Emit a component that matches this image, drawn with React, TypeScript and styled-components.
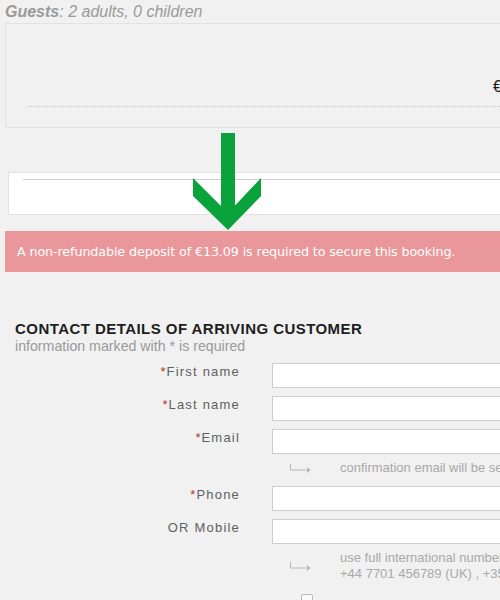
import styled, { createGlobalStyle } from 'styled-components';

const GlobalStyle = createGlobalStyle`
  html, body {
    margin: 0;
    padding: 0;
    background: #f1f1f1;
    overflow: hidden;
  }
  body {
    font-family: "Liberation Sans", Arial, sans-serif;
  }
`;

const Page = styled.div`
  position: relative;
  width: 500px;
  height: 600px;
  overflow: hidden;
`;

const Guests = styled.div`
  padding: 3px 0 0 5px;
  height: 20px;
  font-size: 16px;
  font-style: italic;
  color: #9a9a9a;
  b {
    font-weight: bold;
  }
`;

const SummaryBox = styled.div`
  margin-left: 5px;
  width: 520px;
  height: 105px;
  border: 1px solid #e2e2e2;
  display: flex;
  flex-direction: column;
  justify-content: flex-end;
  padding-bottom: 20px;
  box-sizing: border-box;
`;

const PriceRow = styled.div`
  padding-left: 487px;
  font-size: 16px;
  color: #1a1a1a;
  height: 18px;
  white-space: nowrap;
`;

const Dotted = styled.div`
  margin: 10px 0 0 22px;
  border-top: 1px dotted #c8c8c8;
`;

const WhiteBox = styled.div`
  margin: 44px 0 0 8px;
  width: 520px;
  height: 43px;
  background: #fff;
  border: 1px solid #e2e2e2;
  box-sizing: border-box;
  padding: 6px 0 0 14px;
`;

const InnerLine = styled.div`
  border-top: 1px solid #cfcfcf;
`;

const Banner = styled.div`
  margin: 16px 0 0 5px;
  height: 41px;
  background: #ea979b;
  color: #fff;
  font-family: "DejaVu Sans", Verdana, sans-serif;
  font-size: 12.7px;
  display: flex;
  align-items: center;
  padding-left: 12px;
  letter-spacing: -0.1px;
`;

const Arrow = styled.svg`
  position: absolute;
  left: 190px;
  top: 131px;
`;

const Section = styled.div`
  padding: 48px 0 0 15px;
`;

const Heading = styled.h2`
  margin: 0;
  font-size: 15px;
  font-weight: bold;
  color: #1e1e1e;
  line-height: 18px;
  letter-spacing: 0.45px;
`;

const Sub = styled.div`
  font-size: 14.2px;
  color: #9a9a9a;
  line-height: 16px;
`;

const Form = styled.div`
  display: grid;
  grid-template-columns: 225px 300px;
  column-gap: 32px;
  margin-top: 9px;
  row-gap: 8px;
  align-items: start;
`;

const Label = styled.div`
  text-align: right;
  font-size: 13px;
  color: #606060;
  letter-spacing: 1.2px;
  line-height: 18px;
  span {
    color: #b8323a;
    letter-spacing: 0;
    margin-right: 1px;
  }
`;

const Input = styled.div`
  height: 25px;
  background: #fff;
  border: 1px solid #cdcdcd;
  box-sizing: border-box;
`;

const Hint = styled.div<{ $bottom: number }>`
  grid-column: 2;
  display: flex;
  align-items: center;
  gap: 27px;
  padding-left: 17px;
  margin-top: -2px;
  margin-bottom: ${p => p.$bottom}px;
  font-size: 13px;
  color: #a9a9a9;
  line-height: 16px;
  white-space: nowrap;
`;

const HintIcon = styled.svg`
  flex: none;
`;

const Spacer = styled.div``;

const CheckRow = styled.div`
  grid-column: 2;
  display: flex;
  align-items: center;
  padding-left: 29px;
  margin-top: 4px;
`;

const Check = styled.div`
  width: 10px;
  height: 10px;
  border: 1px solid #bbb;
  border-radius: 2px;
  background: #fafafa;
`;

function HintArrow() {
  return (
    <HintIcon width="24" height="10" viewBox="0 0 24 10">
      <path d="M1.5 1v6h16" stroke="#b5b5b5" strokeWidth="1" fill="none" />
      <path d="M18 4l3.5 3-3.5 3z" fill="#b5b5b5" />
    </HintIcon>
  );
}

const fields = [
  { label: 'First name', req: true },
  { label: 'Last name', req: true },
  { label: 'Email', req: true },
];

export default function App() {
  return (
    <Page>
      <GlobalStyle />
      <Guests>
        <b>Guests</b>: 2 adults, 0 children
      </Guests>
      <SummaryBox>
        <PriceRow>€</PriceRow>
        <Dotted />
      </SummaryBox>
      <WhiteBox>
        <InnerLine />
      </WhiteBox>
      <Banner>A non-refundable deposit of €13.09 is required to secure this booking.</Banner>
      <Arrow width="76" height="102" viewBox="0 0 76 102">
        <rect x="31" y="2" width="14" height="80" fill="#0aa23a" />
        <polygon points="3,47 38,82 71,47 71,65 38,99 3,65" fill="#0aa23a" />
      </Arrow>
      <Section>
        <Heading>CONTACT DETAILS OF ARRIVING CUSTOMER</Heading>
        <Sub>information marked with * is required</Sub>
        <Form>
          {fields.map(f => [
            <Label key={f.label + 'l'}>
              {f.req && <span>*</span>}
              {f.label}
            </Label>,
            <Input key={f.label + 'i'} />,
          ])}
          <Spacer />
          <Hint $bottom={2}>
            <HintArrow />
            confirmation email will be sent to this address
          </Hint>
          <Label>
            <span>*</span>Phone
          </Label>
          <Input />
          <Label>OR Mobile</Label>
          <Input />
          <Spacer />
          <Hint $bottom={0}>
            <HintArrow />
            <div>
              use full international number, e.g.
              <br />
              +44 7701 456789 (UK) , +353 87 1234567 (IE)
            </div>
          </Hint>
          <Spacer />
          <CheckRow>
            <Check />
          </CheckRow>
        </Form>
      </Section>
    </Page>
  );
}
